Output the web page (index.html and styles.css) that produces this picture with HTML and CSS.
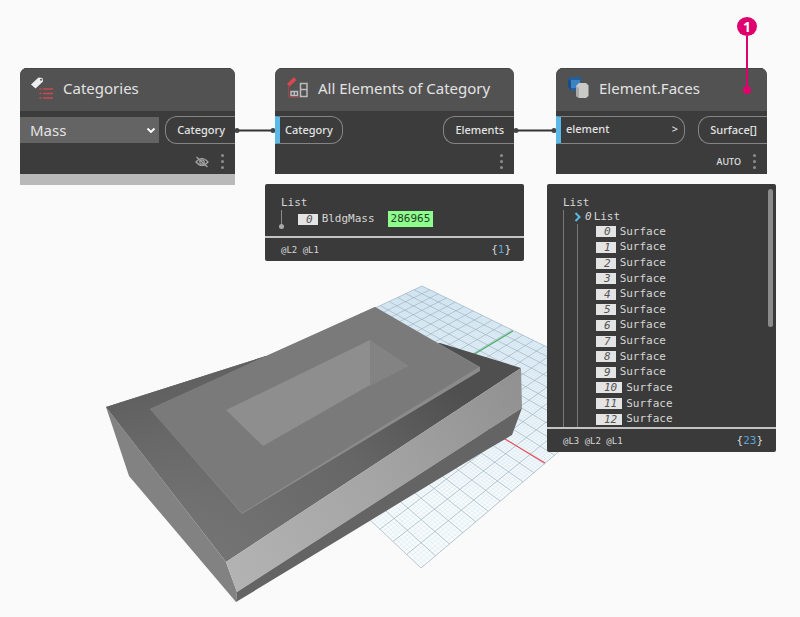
FILE: index.html
```
<!DOCTYPE html>
<html lang="en">
<head>
<meta charset="utf-8">
<title>Element.Faces graph</title>
<link rel="stylesheet" href="styles.css">
</head>
<body>
<main class="workspace">
  <svg class="scene" viewBox="0 0 800 617" width="800" height="617" aria-hidden="true">
    <defs>
      <linearGradient id="top" gradientUnits="userSpaceOnUse" x1="420" y1="350" x2="220" y2="540"><stop offset="0" stop-color="#4f4f4f"/><stop offset=".45" stop-color="#666"/><stop offset="1" stop-color="#737373"/></linearGradient>
      <linearGradient id="front" gradientUnits="userSpaceOnUse" x1="226" y1="575" x2="522" y2="385"><stop offset="0" stop-color="#b3b3b3"/><stop offset=".5" stop-color="#a5a5a5"/><stop offset="1" stop-color="#919191"/></linearGradient>
      <linearGradient id="back" gradientUnits="userSpaceOnUse" x1="180" y1="380" x2="240" y2="540"><stop offset="0" stop-color="#606060"/><stop offset="1" stop-color="#707070" stop-opacity="0"/></linearGradient>
      <linearGradient id="ground" gradientUnits="userSpaceOnUse" x1="440" y1="300" x2="440" y2="500"><stop offset="0" stop-color="#dfecf4"/><stop offset="1" stop-color="#f8fbfc"/></linearGradient>
    </defs>
    <polygon points="422,286 633,389 421,568 222,380" fill="url(#ground)"/>
    <path id="minor" fill="none" stroke="#add3e8" stroke-width=".5" opacity=".45"/>
    <path id="major" fill="none" stroke="#98adb9" stroke-width=".7" opacity=".85"/>
    <path d="M513 331 421 386" stroke="#4caf66" stroke-width="1.2"/>
    <path d="M545 463 421 389" stroke="#ee4a55" stroke-width="1.2"/>
    <polygon points="106,407 266,356 440,343 521,368 226,562" fill="url(#top)"/>
    <polygon points="106,407 266,356 226,562" fill="url(#back)"/>
    <polygon points="106,407 129,476 236,602 237,592 226,562" fill="#828282"/>
    <polygon points="226,562 521,368 522,408 237,592" fill="url(#front)"/>
    <polygon points="237,592 522,408 512,435 483,452 340,539 236,602" fill="#646464"/>
    <polygon points="375,307 150,409 242,514 480,371 480,367" fill="#8b8b8b"/>
    <polygon points="375,307 266,356 150,409 242,513 479,367 435,342" fill="#7a7a7a"/>
    <polygon points="226,410 370,340 370,385 263,446" fill="#8e8e8e"/>
    <polygon points="370,340 409,366 370,386" fill="#838383"/>
  </svg>

  <svg class="scene" viewBox="0 0 800 617" width="800" height="617" aria-hidden="true">
    <path d="M237 130.500H275M516 130.500H556" stroke="#333" stroke-width="2.200"/>
    <circle cx="237" cy="130.500" r="2.500" fill="#444"/><circle cx="273" cy="130.500" r="2.500" fill="#444"/>
    <circle cx="516" cy="130.500" r="2.500" fill="#444"/><circle cx="554" cy="130.500" r="2.500" fill="#444"/>
  </svg>

  <section class="node node-categories">
    <header class="node-head">
      <svg class="node-icon" width="24" height="24" viewBox="0 0 24 24"><path d="M0 8.500 7.500 1.500 11.500 2 12 5.500 4.500 12.500Z" fill="#eee"/><circle cx="10" cy="3.800" r="1" fill="#555"/><path d="M12 13h10M12 17.500h10M12 22h10" stroke="#c94a50" stroke-width="1.600"/><path d="M8.500 13h2M8.500 17.500h2M8.500 22h2" stroke="#c94a50" stroke-width="1.600"/></svg>
      <h2>Categories</h2>
    </header>
    <div class="ports">
      <div class="picker">
        <select aria-label="Category"><option>Mass</option></select>
        <svg class="chevron" width="10" height="7" viewBox="0 0 10 7"><path d="M1.500 1.500 5 5 8.500 1.500" fill="none" stroke="#fff" stroke-width="1.800"/></svg>
      </div>
      <button class="port out">Category</button>
    </div>
    <footer class="node-foot">
      <svg width="14" height="12" viewBox="0 0 14 12" fill="none" stroke="#a5a5a5" stroke-width="1.200"><path d="M1 6Q7-1 13 6 7 13 1 6Z"/><circle cx="7" cy="6" r="2.200"/><path d="M1.500 1 12.500 11"/></svg>
      <button class="dots" aria-label="Node menu"><i></i><i></i><i></i></button>
    </footer>
  </section>

  <section class="node node-elements">
    <header class="node-head">
      <svg class="node-icon" width="24" height="24" viewBox="0 0 24 24"><path d="M1 8 8 1 10.500 4 3.500 10.500Z" fill="#d5484d"/><path d="M2.500 9V21.500H14" fill="none" stroke="#a04448"/><path d="M14.500 7.500h6.500v13h-6.500zM14.500 13.500h6.500M5 15.500h6.500v4H5zM8.300 15.500v4" fill="none" stroke="#bcbcbc" stroke-width="1.500"/></svg>
      <h2>All Elements of Category</h2>
    </header>
    <div class="ports">
      <button class="port in">Category</button>
      <button class="port out">Elements</button>
    </div>
    <footer class="node-foot"><button class="dots" aria-label="Node menu"><i></i><i></i><i></i></button></footer>
  </section>

  <section class="node node-faces">
    <header class="node-head">
      <svg class="node-icon" width="24" height="24" viewBox="0 0 24 24"><path d="M1 3 4 1h10v11l-2 3H5L1 11Z" fill="#245f9c"/><path d="M4 4h9v8H4Z" fill="#3d82c3"/><path d="M1 3 4 5v9l-3-3Z" fill="#194f86"/><path d="M9 10 12 7h7l2.500 2.500V20L19 22h-7l-3-2Z" fill="#c9c9c7"/><path d="M9 10 12 12v10l-3-2Z" fill="#aaa"/></svg>
      <h2>Element.Faces</h2>
    </header>
    <div class="ports">
      <button class="port in wide"><span>element</span><span>&gt;</span></button>
      <button class="port out">Surface[]</button>
    </div>
    <footer class="node-foot"><span>AUTO</span><button class="dots" aria-label="Node menu"><i></i><i></i><i></i></button></footer>
  </section>

  <section class="preview preview-elements">
    <div class="preview-body">
      <div>List</div>
      <div class="single"><b class="index">0</b><span>BldgMass</span><a class="element-id" href="#">286965</a></div>
    </div>
    <footer class="preview-foot"><span>@L2 @L1</span><span class="count">{<em>1</em>}</span></footer>
  </section>

  <section class="preview preview-faces">
    <div class="preview-body">
      <div>List</div>
      <div class="tree">
        <div class="branch"><svg width="7" height="10" viewBox="0 0 7 10"><path d="M1.500 1 5.500 5 1.500 9" fill="none" stroke="#5ab9e6" stroke-width="2"/></svg><b>0</b><span>List</span></div>
        <ol class="items">
          <li><b class="index">0</b>Surface</li>
          <li><b class="index">1</b>Surface</li>
          <li><b class="index">2</b>Surface</li>
          <li><b class="index">3</b>Surface</li>
          <li><b class="index">4</b>Surface</li>
          <li><b class="index">5</b>Surface</li>
          <li><b class="index">6</b>Surface</li>
          <li><b class="index">7</b>Surface</li>
          <li><b class="index">8</b>Surface</li>
          <li><b class="index">9</b>Surface</li>
          <li><b class="index">10</b>Surface</li>
          <li><b class="index">11</b>Surface</li>
          <li><b class="index">12</b>Surface</li>
        </ol>
      </div>
      <div class="scrollbar"></div>
    </div>
    <footer class="preview-foot"><span>@L3 @L2 @L1</span><span class="count">{<em>23</em>}</span></footer>
  </section>

  <div class="callout"><span class="callout-badge">1</span><span class="callout-line"></span><span class="callout-dot"></span></div>
</main>
<script src="grid.js"></script>
</body>
</html>
```
FILE: styles.css
```
* { box-sizing: border-box; }
body { margin: 0; background: #fafafa; font-family: "Noto Sans", sans-serif; }
button, select { font: inherit; color: inherit; border: 0; background: none; padding: 0; }
.workspace { position: relative; min-height: 100vh; overflow: hidden; }
.scene { position: absolute; left: 0; top: 0; }

.node { position: absolute; top: 68px; border-radius: 7px 7px 0 0; overflow: hidden; background: #3c3c3c; color: #e3e3e3; }
.node-categories { left: 20px; width: 215px; border-bottom: 11px solid #b9b9b9; }
.node-elements { left: 275px; width: 239px; }
.node-faces { left: 556px; width: 211px; }
.node-head { display: flex; align-items: center; gap: 8px; height: 43px; padding: 0 0 4px 11px; background: #525252; border-top: 1px solid #454545; }
.node-head h2 { margin: 0; font-size: 15px; font-weight: 400; line-height: 20px; white-space: nowrap; }
.node-icon { flex: none; }
.ports { display: flex; justify-content: space-between; align-items: center; height: 38px; }
.port { height: 28px; border: 1px solid #858585; font-size: 11px; font-weight: 500; line-height: 24px; }
.port.out { border-right: 0; border-radius: 12px 0 0 12px; padding: 0 10px 0 11px; }
.port.in { border-left: 5px solid #5ab9e6; border-radius: 0 12px 12px 0; padding: 0 9px 0 5px; }
.port.wide { display: flex; justify-content: space-between; width: 129px; padding-right: 6px; }
.picker { position: relative; width: 139px; }
.picker select { appearance: none; display: block; width: 100%; height: 26px; padding-left: 10px; background: #646464; font-size: 15px; line-height: 20px; }
.chevron { position: absolute; right: 3px; top: 10px; pointer-events: none; }
.node-foot { display: flex; justify-content: flex-end; align-items: center; gap: 12px; height: 25px; padding-right: 11px; font-size: 9px; font-weight: 500; }
.dots { display: flex; flex-direction: column; gap: 3px; }
.dots i { width: 3px; height: 3px; border-radius: 50%; background: #8c8c8c; }

.preview { position: absolute; top: 184px; background: #3a3a3a; color: #d6d6d6; border-radius: 2px; font: 11px/14px "DejaVu Sans Mono", monospace; }
.preview-elements { left: 265px; width: 259px; }
.preview-faces { left: 547px; width: 229px; }
.preview-body { position: relative; padding: 12px 16px 0; }
.preview-elements .preview-body { height: 52px; }
.preview-faces .preview-body { height: 243px; }
.index { display: inline-block; height: 11px; padding: 0 5px 0 8px; margin-right: 4px; background: #e4e4e4; color: #555; font-weight: 400; font-style: italic; line-height: 11px; }
.single { position: relative; display: flex; align-items: center; height: 18px; padding-left: 17px; }
.single::before { content: ""; position: absolute; left: 0; top: 0; width: 1px; height: 16px; background: #8c8c8c; }
.single::after { content: ""; position: absolute; left: -2px; top: 14px; width: 5px; height: 5px; border-radius: 50%; background: #aaa; }
.element-id { margin-left: 13px; padding: 0 3px; background: #8dff8d; color: #234123; line-height: 16px; text-decoration: none; }
.preview-foot { display: flex; justify-content: space-between; align-items: center; height: 25px; padding: 0 13px 0 16px; border-top: 2px solid #c4c4c4; font-size: 9px; }
.count { font-size: 11px; }
.count em { color: #5ba4d8; font-style: normal; }
.tree { border-left: 1px solid #777; height: 217px; }
.branch { display: flex; align-items: center; gap: 4px; height: 14px; padding-left: 10px; }
.branch b { font-weight: 400; font-style: italic; margin-right: -2px; }
.items { display: flex; flex-direction: column; list-style: none; height: 203px; margin: 0 0 0 13px; padding: 0 0 0 18px; border-left: 1px solid #777; }
.items li { display: flex; flex: 1; align-items: center; }
.scrollbar { position: absolute; right: 3px; top: 5px; width: 5px; height: 138px; border-radius: 3px; background: #8b8b8b; }

.callout { position: absolute; left: 737px; top: 17px; display: flex; flex-direction: column; align-items: center; }
.callout-badge { width: 20px; height: 19px; border-radius: 50%; background: #df006e; color: #fff; font-size: 14px; font-weight: 700; line-height: 19px; text-align: center; }
.callout-line { width: 2px; height: 50px; background: #df006e; }
.callout-dot { width: 8px; height: 8px; border-radius: 50%; background: #df006e; }
```
FILE: grid.js
```
// Perspective ground grid: maps the unit square onto the plane's four corners.
(function () {
  var p = [[422, 286], [633, 389], [421, 568], [222, 380]];
  var sx = p[0][0] - p[1][0] + p[2][0] - p[3][0], sy = p[0][1] - p[1][1] + p[2][1] - p[3][1];
  var dx1 = p[1][0] - p[2][0], dx2 = p[3][0] - p[2][0], dy1 = p[1][1] - p[2][1], dy2 = p[3][1] - p[2][1];
  var det = dx1 * dy2 - dx2 * dy1;
  var g = (sx * dy2 - dx2 * sy) / det, h = (dx1 * sy - sx * dy1) / det;
  function at(u, v) {
    var w = g * u + h * v + 1;
    var x = (p[1][0] - p[0][0] + g * p[1][0]) * u + (p[3][0] - p[0][0] + h * p[3][0]) * v + p[0][0];
    var y = (p[1][1] - p[0][1] + g * p[1][1]) * u + (p[3][1] - p[0][1] + h * p[3][1]) * v + p[0][1];
    return (x / w).toFixed(2) + " " + (y / w).toFixed(2);
  }
  function lines(n) {
    var d = "";
    for (var i = 0; i <= n; i++) {
      var t = i / n;
      d += "M" + at(t, 0) + "L" + at(t, 1) + "M" + at(0, t) + "L" + at(1, t);
    }
    return d;
  }
  document.getElementById("minor").setAttribute("d", lines(100));
  document.getElementById("major").setAttribute("d", lines(20));
})();
```
